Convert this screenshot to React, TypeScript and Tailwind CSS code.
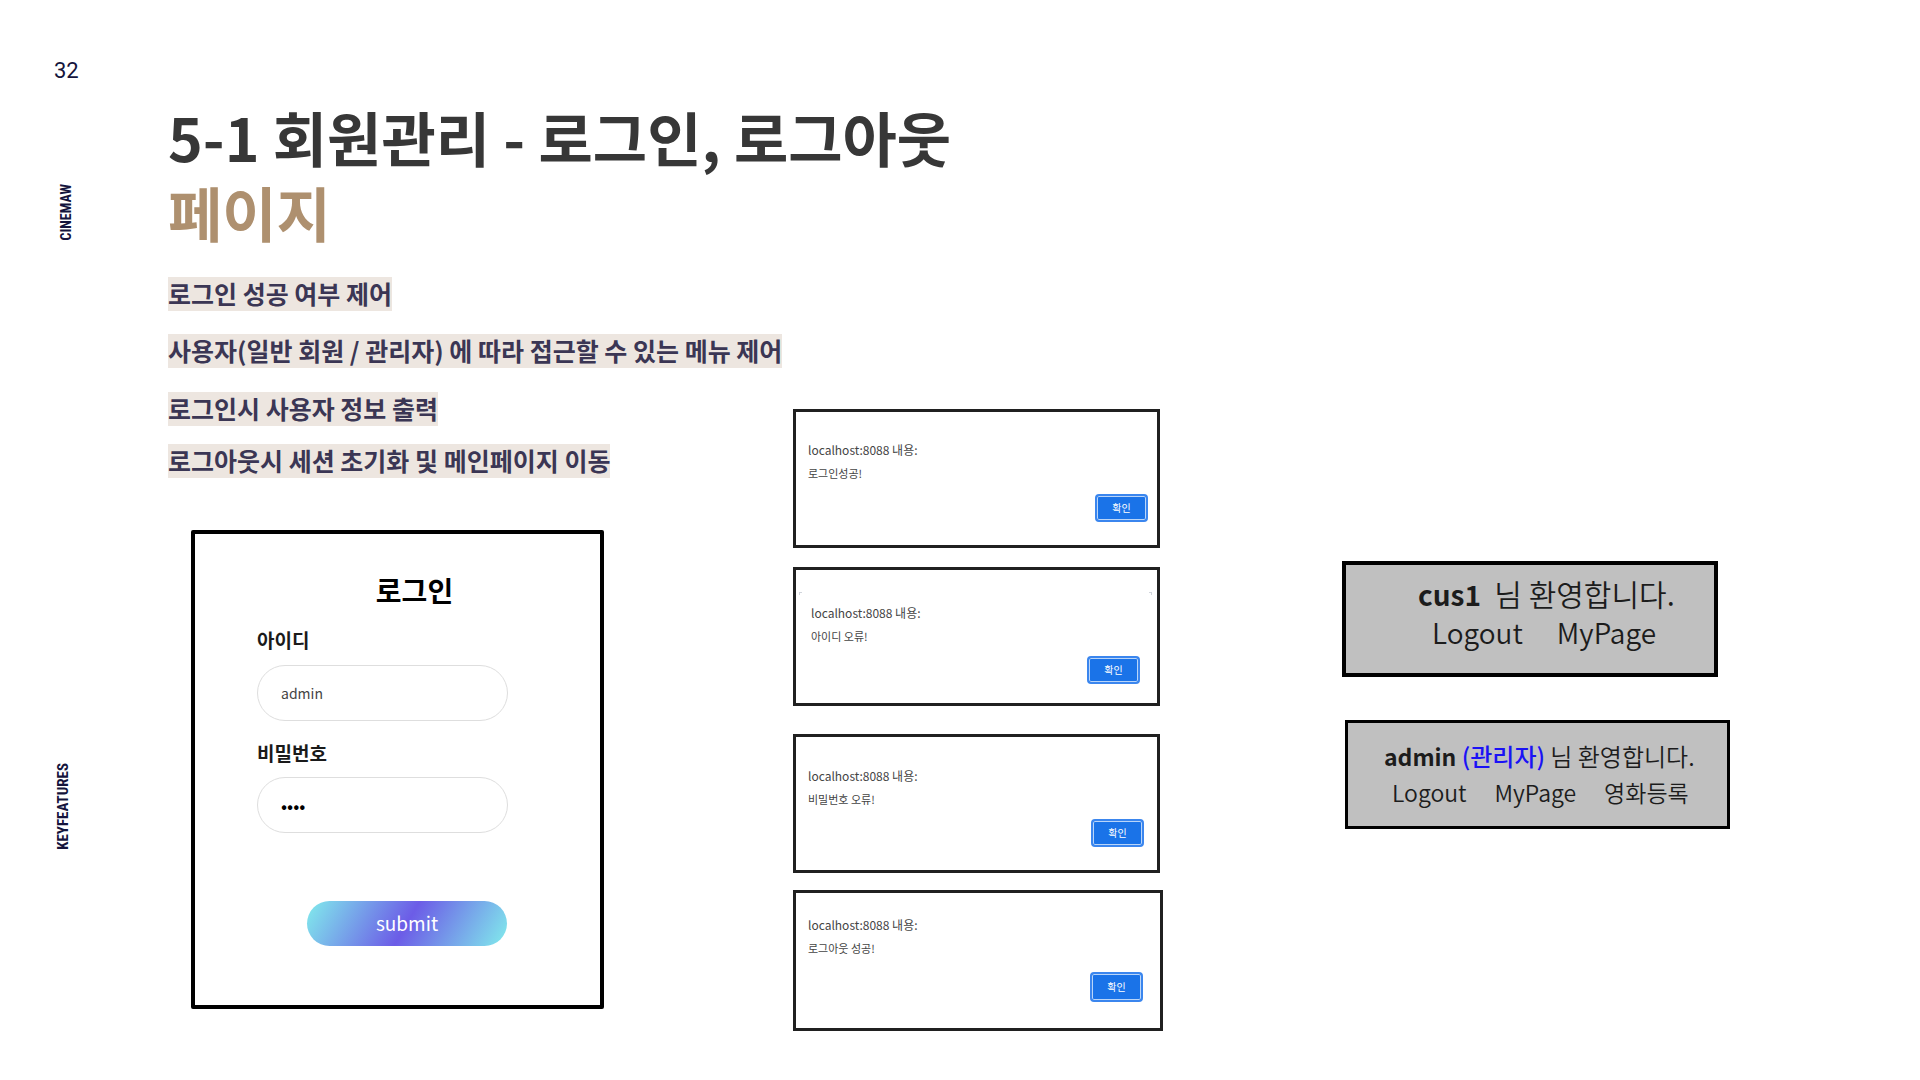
import React from "react";

type Dialog = {
  message: string;
  box: string;
  text: string;
  button: string;
  corners?: boolean;
};

const points = [
  { text: "로그인 성공 여부 제어", gap: "" },
  { text: "사용자(일반 회원 / 관리자) 에 따라 접근할 수 있는 메뉴 제어", gap: "mt-[23px]" },
  { text: "로그인시 사용자 정보 출력", gap: "mt-6" },
  { text: "로그아웃시 세션 초기화 및 메인페이지 이동", gap: "mt-[18px]" },
];

const dialogs: Dialog[] = [
  { message: "로그인성공!", box: "h-[139px] max-w-[367px] pt-[26px] pr-[9px]", text: "pl-3", button: "mt-[10px] h-7" },
  {
    message: "아이디 오류!",
    box: "mt-[19px] h-[139px] max-w-[367px] pt-[31px] pr-[17px]",
    text: "pl-[15px]",
    button: "mt-[9px] h-7",
    corners: true,
  },
  {
    message: "비밀번호 오류!",
    box: "mt-7 h-[139px] max-w-[367px] pt-[27px] pr-[13px]",
    text: "pl-3",
    button: "mt-[9px] h-7",
  },
  { message: "로그아웃 성공!", box: "mt-[17px] h-[141px] max-w-[370px] pt-5 pr-[17px]", text: "pl-3", button: "mt-[13px] h-[30px]" },
];

function SideLabel({ children, className }: { children: React.ReactNode; className: string }) {
  return (
    <span
      className={`rotate-180 font-['Liberation_Sans_Narrow','Roboto_Condensed','Roboto',sans-serif] leading-5 font-bold whitespace-nowrap text-[#14143c] [writing-mode:vertical-rl] ${className}`}
    >
      {children}
    </span>
  );
}

function LoginCard() {
  return (
    <form
      className="mt-[52px] ml-[23px] h-[479px] w-[413px] rounded-xs border-4 border-black bg-white px-[62px] pt-9"
      onSubmit={(e) => e.preventDefault()}
    >
      <h2 className="pl-[34px] text-center text-[28px] leading-10 font-bold text-black">로그인</h2>
      <label htmlFor="user-id" className="mt-4 block text-[19px] leading-7 font-bold text-[#1a1a1a]">
        아이디
      </label>
      <input
        id="user-id"
        type="text"
        defaultValue="admin"
        className="mt-[11px] block h-14 w-[251px] rounded-full border border-[#dedede] px-[23px] text-[14px] text-[#444] outline-none"
      />
      <label htmlFor="user-pw" className="mt-[18px] block text-[19px] leading-7 font-bold text-[#1a1a1a]">
        비밀번호
      </label>
      <input
        id="user-pw"
        type="password"
        defaultValue="1234"
        className="mt-[10px] block h-14 w-[251px] rounded-full border border-[#dedede] px-[23px] text-[18px] text-black outline-none"
      />
      <button
        type="submit"
        className="mt-[68px] ml-[50px] block h-[45px] w-[200px] rounded-full bg-[linear-gradient(120deg,#81ecec,#6c5ce7_50%,#81ecec)] text-[19px] text-white"
      >
        submit
      </button>
    </form>
  );
}

function AlertBox({ message, box, text, button, corners }: Dialog) {
  return (
    <section className={`relative flex w-full flex-col border-[3px] border-[#202020] bg-white text-[#444] ${box}`}>
      {corners && (
        <>
          <span className="absolute top-[22px] left-[3px] size-[3px] border-t border-l border-gray-300" />
          <span className="absolute top-[22px] right-[5px] size-[3px] border-t border-r border-gray-300" />
        </>
      )}
      <p className={`text-[12px] leading-6 ${text}`}>localhost:8088 내용:</p>
      <p className={`text-[11px] leading-[22px] ${text}`}>{message}</p>
      <button
        type="button"
        className={`w-[53px] self-end rounded-sm border-2 border-[#3b86ee] bg-[#1a73e8] pb-px text-[10px] text-white ring-1 ring-[#b9d5f9] ring-inset ${button}`}
      >
        확인
      </button>
    </section>
  );
}

export default function App() {
  return (
    <div className="flex min-h-screen bg-white font-['Noto_Sans_CJK_KR',sans-serif]">
      <aside className="flex w-[168px] shrink-0 flex-col items-start">
        <span className="mt-[59px] ml-[54px] font-['Roboto',sans-serif] text-[22px] leading-6 text-[#14143c]">32</span>
        <SideLabel className="mt-[101px] ml-14 text-[14px]">CINEMAW</SideLabel>
        <SideLabel className="mt-[522px] ml-[53px] text-[15px]">KEYFEATURES</SideLabel>
      </aside>

      <main className="min-w-0 flex-1 pt-[99px]">
        <h1 className="text-[59px] leading-[75px] font-bold text-[#373737]">
          5-1 회원관리 - 로그인, 로그아웃
          <br />
          <span className="text-[#ae906f]">페이지</span>
        </h1>

        <div className="mt-7 grid grid-cols-[625fr_549fr_578fr] items-start">
          <div>
            <ul>
              {points.map((p) => (
                <li key={p.text} className={`flex ${p.gap}`}>
                  <span className="bg-[#ede6e0] pb-[2px] text-[25px] leading-8 font-bold whitespace-nowrap text-[#3b3654]">
                    {p.text}
                  </span>
                </li>
              ))}
            </ul>
            <LoginCard />
          </div>

          <div className="pt-[132px]">
            {dialogs.map((d) => (
              <AlertBox key={d.message} {...d} />
            ))}
          </div>

          <div className="pt-[284px] text-[#1c1c1c]">
            <section className="h-[116px] w-[376px] border-4 border-black bg-[#c0c0c0] pt-2 pl-[72px] text-[30px] leading-10 font-[350] whitespace-nowrap">
              <p>
                <b className="text-[28px] font-bold">cus1</b>&nbsp; 님 환영합니다.
              </p>
              <nav className="flex gap-[34px] pl-[14px] text-[28px] leading-9">
                <a href="#logout">Logout</a>
                <a href="#mypage">MyPage</a>
              </nav>
            </section>
            <section className="mt-[43px] ml-[3px] h-[109px] w-[385px] border-[3px] border-black bg-[#c0c0c0] pt-[15px] pl-9 text-[24px] leading-9 font-[350] whitespace-nowrap">
              <p>
                <b className="text-[23px] font-bold">admin</b> <span className="font-medium text-[#1a12f5]">(관리자)</span> 님 환영합니다.
              </p>
              <nav className="flex gap-7 pl-2 text-[23px] leading-9">
                <a href="#logout">Logout</a>
                <a href="#mypage">MyPage</a>
                <a href="#register">영화등록</a>
              </nav>
            </section>
          </div>
        </div>
      </main>
    </div>
  );
}
